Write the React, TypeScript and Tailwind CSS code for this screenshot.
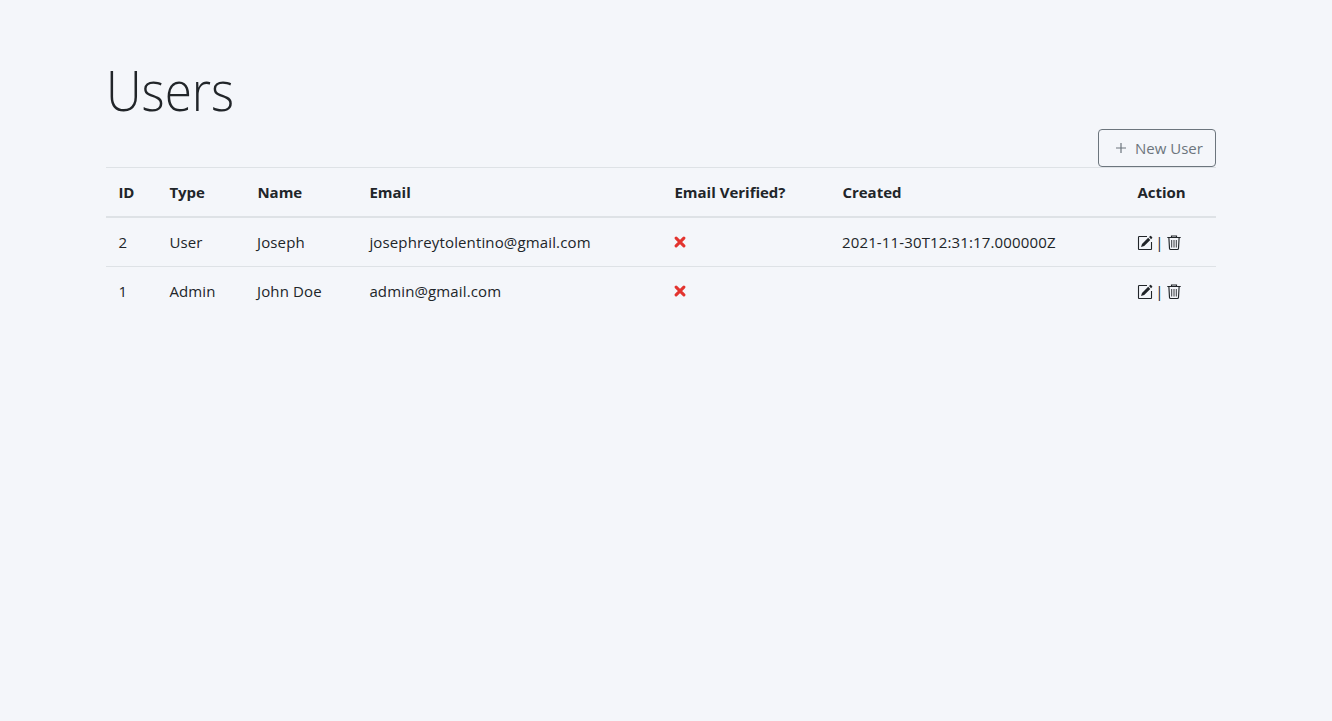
import React from "react";

type User = { id: number; type: string; name: string; email: string; created: string };

const users: User[] = [
  { id: 2, type: "User", name: "Joseph", email: "josephreytolentino@gmail.com", created: "2021-11-30T12:31:17.000000Z" },
  { id: 1, type: "Admin", name: "John Doe", email: "admin@gmail.com", created: "" },
];

const columns = "grid grid-cols-[51px_88px_112px_305px_168px_295px_91px] items-center";

function EditIcon() {
  return (
    <svg width="16" height="16" viewBox="0 0 16 16" fill="none">
      <path d="M10 1.5H2.2Q1.5 1.5 1.5 2.2V14Q1.5 14.5 2 14.5H14Q14.5 14.5 14.5 14V7" stroke="#212529" strokeWidth="1.1" />
      <path d="M4 12.1l1-3.2L11.2 2.8l2.1 2.1-6.1 6.1zM12 2.1l1.2-1.1q.4-.3.8 0l1.2 1.2q.3.4 0 .8L14.1 4.2z" fill="#212529" />
    </svg>
  );
}

function TrashIcon() {
  return (
    <svg width="16" height="16" viewBox="0 0 16 16" fill="none" stroke="#212529">
      <path d="M1.3 2.5h13.4M5.5 2.5V1h5v1.5M2.9 3l.6 10.5q.1 1 1.1 1h6.8q1 0 1.1-1L13.1 3" strokeWidth="1.15" />
      <path d="M5.7 5v7.5M8 5v7.5M10.3 5v7.5" strokeWidth="0.9" />
    </svg>
  );
}

function CrossIcon() {
  return (
    <svg width="12" height="12" viewBox="0 0 12 12" stroke="#e3342f" strokeWidth="3" strokeLinecap="round">
      <path d="M2.1 2.1l7.8 7.8M9.9 2.1l-7.8 7.8" />
    </svg>
  );
}

export default function App() {
  return (
    <main className="min-h-screen bg-[#f4f6fa] pt-[56px] pl-[106px] font-['Open_Sans','Noto_Sans',sans-serif] text-[15px] tracking-[0.14px] text-[#212529]">
      <div className="w-[1110px]">
        <h1 className="h-[73px] text-[55px] leading-[68px] font-light tracking-normal">
          <span className="inline-block origin-left scale-x-[0.9]">Users</span>
        </h1>
        <div className="flex justify-end">
          <button className="flex h-[38px] w-[118px] items-center rounded-[4px] border border-[#6c757d] pl-[17px] text-[#6c757d]">
            <svg width="10" height="10" viewBox="0 0 10 10" stroke="currentColor" strokeWidth="1.2">
              <path d="M5 0v10M0 5h10" />
            </svg>
            <span className="ml-[9px] tracking-normal whitespace-nowrap">New User</span>
          </button>
        </div>
        <div>
          <div className={`${columns} h-[51px] border-t border-b-2 border-[#dee2e6] font-bold tracking-normal`}>
            {["ID", "Type", "Name", "Email", "Email Verified?", "Created", "Action"].map((label) => (
              <div key={label} className="pl-[12.4px] whitespace-nowrap">{label}</div>
            ))}
          </div>
          {users.map((user, index) => (
            <div key={user.id} className={`${columns} ${index > 0 ? "h-[50px] border-t border-[#dee2e6]" : "h-[48px]"}`}>
              <div className="pl-[12.4px]">{user.id}</div>
              <div className="pl-[12.4px]">{user.type}</div>
              <div className="pl-3">{user.name}</div>
              <div className="pl-[12.4px]">{user.email}</div>
              <div className={index > 0 ? "pb-px pl-3" : "pl-3"}><CrossIcon /></div>
              <div className="pl-3">{user.created}</div>
              <div className={`flex items-center pl-3 ${index > 0 ? "" : "pt-px"}`}>
                <EditIcon />
                <span className="w-[13px] text-center">|</span>
                <TrashIcon />
              </div>
            </div>
          ))}
        </div>
      </div>
    </main>
  );
}
